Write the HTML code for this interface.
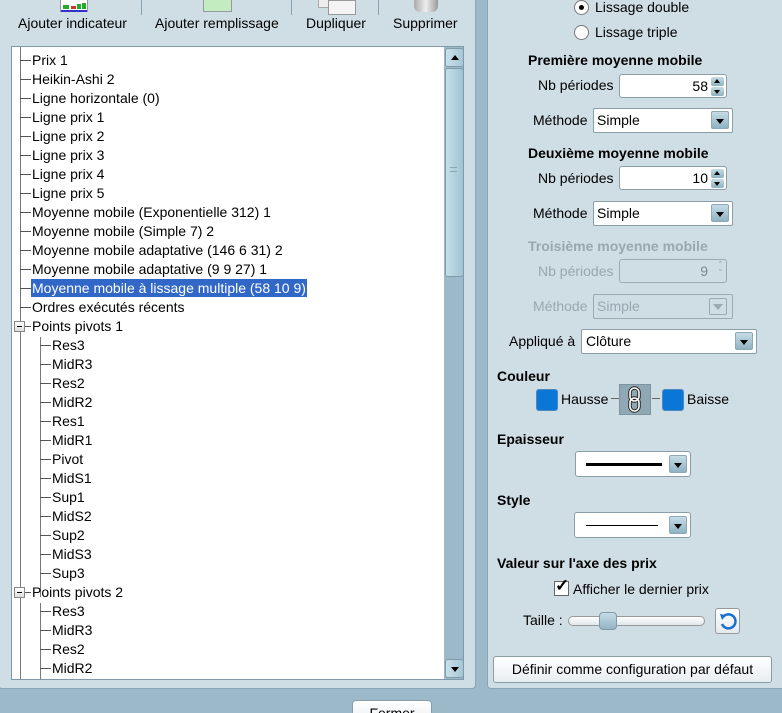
<!DOCTYPE html>
<html style="width:782px;height:713px;overflow:hidden"><head><meta charset="utf-8"><style>
*{margin:0;padding:0;box-sizing:border-box}
body{width:782px;height:713px;background:#9bb9c8;font-family:"Liberation Sans",Arial,sans-serif;font-size:13px;color:#000;position:relative;overflow:hidden}
.a{position:absolute;white-space:nowrap}
.panel{position:absolute;background:#cfdde4;border:1px solid #8aa5b3;border-radius:4px}
.tree{position:absolute;left:11px;top:46px;width:453px;height:634px;background:#fff;border:1px solid #7f9aa8;overflow:hidden}
.row{position:absolute;height:19px;line-height:19px}
.hl{position:absolute;background:#000;width:1px}
.hh{position:absolute;background:#555;height:1px}
.b{font-weight:bold}
.dis{color:#98a8b0}
.field{position:absolute;background:#fff;border:1px solid #8a9ea8;border-radius:3px}
.dd{position:absolute;width:18px;height:18px;border-radius:2px;background:linear-gradient(#c5dce6,#8fb2c2);border:1px solid #8ea9b6}
.dd:after{content:"";position:absolute;left:4px;top:7px;border-left:4px solid transparent;border-right:4px solid transparent;border-top:5px solid #000}
.btn{position:absolute;background:linear-gradient(#fff,#e8edf0);border:1px solid #8a9ea8;border-radius:3px;text-align:center}
.sp{position:absolute;right:2px;width:13px;height:9px;background:linear-gradient(#c5dce6,#8fb2c2);border-radius:2px}
.up:after{content:"";position:absolute;left:3px;top:2px;border-left:3px solid transparent;border-right:3px solid transparent;border-bottom:4px solid #000}
.dn:after{content:"";position:absolute;left:3px;top:3px;border-left:3px solid transparent;border-right:3px solid transparent;border-top:4px solid #000}
</style></head><body>
<div class="panel" style="left:-2px;top:-5px;width:478px;height:694px"></div>
<div class="panel" style="left:487px;top:-5px;width:300px;height:694px"></div>

<div class="a" style="left:60px;top:-2px;width:28px;height:14px;background:#fff;border:1px solid #999"><div class="a" style="left:2px;top:6px;width:6px;height:4px;background:#2a2"></div><div class="a" style="left:10px;top:7px;width:5px;height:3px;background:#c33"></div><div class="a" style="left:16px;top:5px;width:4px;height:5px;background:#2a2"></div><div class="a" style="left:21px;top:4px;width:4px;height:6px;background:#2a2"></div><div class="a" style="left:0;top:11px;width:26px;height:2px;background:#33c"></div></div>
<div class="a" style="left:203px;top:-2px;width:29px;height:14px;background:#c3ecc3;border:1px solid #999"></div>
<div class="a" style="left:318px;top:-2px;width:26px;height:10px;background:#eee;border:1px solid #aaa"></div>
<div class="a" style="left:328px;top:0px;width:28px;height:15px;background:#f4f4f4;border:1px solid #999"></div>
<div class="a" style="left:414px;top:-2px;width:24px;height:14px;background:linear-gradient(90deg,#aaa,#eee,#999);border-radius:0 0 6px 6px"></div>
<div class="a" style="left:141px;top:0;width:1px;height:15px;background:#8aa5b3"></div>
<div class="a" style="left:291px;top:0;width:1px;height:15px;background:#8aa5b3"></div>
<div class="a" style="left:378px;top:0;width:1px;height:15px;background:#8aa5b3"></div>
<div class="a" style="left:18px;top:15px;font-size:14px">Ajouter indicateur</div>
<div class="a" style="left:155px;top:15px;font-size:14px">Ajouter remplissage</div>
<div class="a" style="left:306px;top:15px;font-size:14px">Dupliquer</div>
<div class="a" style="left:393px;top:15px;font-size:14px">Supprimer</div>

<div class="tree">
 <div class="hl" style="left:8px;top:0;height:640px;background:#777"></div>
 <div class="hl" style="left:28px;top:290px;height:260px;background:#777"></div>
 <div class="hl" style="left:28px;top:556px;height:90px;background:#777"></div>
 <div id="rows"></div>
 <div class="a" style="left:432px;top:0;width:20px;height:632px;background:#9bb9c8"></div>
 <div class="a" style="left:433px;top:1px;width:19px;height:19px;background:linear-gradient(90deg,#c9e0ea,#a6c7d6);border:1px solid #7f9aa8;border-radius:3px"><div class="a" style="left:5px;top:6px;border-left:4px solid transparent;border-right:4px solid transparent;border-bottom:5px solid #000"></div></div>
 <div class="a" style="left:433px;top:21px;width:19px;height:209px;background:linear-gradient(90deg,#c4dfe9,#a1c3d3);border:1px solid #7f9aa8;border-radius:3px"></div>
 <div class="a" style="left:438px;top:120px;width:7px;height:5px;border-top:1px solid #8aa;border-bottom:1px solid #8aa"></div>
 <div class="a" style="left:433px;top:612px;width:19px;height:19px;background:linear-gradient(90deg,#c9e0ea,#a6c7d6);border:1px solid #7f9aa8;border-radius:3px"><div class="a" style="left:5px;top:7px;border-left:4px solid transparent;border-right:4px solid transparent;border-top:5px solid #000"></div></div>
</div>

<div class="a" style="left:574px;top:0px;width:15px;height:15px;border-radius:50%;background:#fff;border:1px solid #777"><div class="a" style="left:4px;top:4px;width:5px;height:5px;border-radius:50%;background:#000"></div></div>
<div class="a" style="left:595px;top:-1px;font-size:14px">Lissage double</div>
<div class="a" style="left:574px;top:25px;width:15px;height:15px;border-radius:50%;background:#fff;border:1px solid #777"></div>
<div class="a" style="left:595px;top:24px;font-size:14px">Lissage triple</div>

<div class="a b" style="left:528px;top:52px;font-size:14px">Première moyenne mobile</div>
<div class="a" style="left:538px;top:77px;font-size:14px">Nb périodes</div>
<div class="field" style="left:619px;top:74px;width:108px;height:24px"><span class="a" style="right:18px;top:3px;font-size:14px">58</span><div class="sp up" style="top:2px"></div><div class="sp dn" style="top:12px"></div></div>
<div class="a" style="left:533px;top:112px;font-size:14px">Méthode</div>
<div class="field" style="left:593px;top:108px;width:140px;height:25px;border-radius:2px"><span class="a" style="left:3px;top:3px;font-size:14px">Simple</span><div class="dd" style="right:3px;top:2px"></div></div>

<div class="a b" style="left:528px;top:145px;font-size:14px">Deuxième moyenne mobile</div>
<div class="a" style="left:538px;top:170px;font-size:14px">Nb périodes</div>
<div class="field" style="left:619px;top:166px;width:108px;height:24px"><span class="a" style="right:18px;top:3px;font-size:14px">10</span><div class="sp up" style="top:2px"></div><div class="sp dn" style="top:12px"></div></div>
<div class="a" style="left:533px;top:205px;font-size:14px">Méthode</div>
<div class="field" style="left:593px;top:201px;width:140px;height:25px;border-radius:2px"><span class="a" style="left:3px;top:3px;font-size:14px">Simple</span><div class="dd" style="right:3px;top:2px"></div></div>

<div class="a b dis" style="left:528px;top:238px;font-size:14px">Troisième moyenne mobile</div>
<div class="a dis" style="left:538px;top:263px;font-size:14px">Nb périodes</div>
<div class="field" style="left:619px;top:259px;width:108px;height:24px;background:#cfdde4;border-color:#9aaab2"><span class="a" style="right:18px;top:3px;font-size:14px;color:#7a8a92">9</span><span class="a" style="right:4px;top:0px;font-size:9px;color:#889">&#710;</span><span class="a" style="right:4px;top:8px;font-size:9px;color:#889">&#711;</span></div>
<div class="a dis" style="left:533px;top:298px;font-size:14px">Méthode</div>
<div class="field" style="left:593px;top:294px;width:140px;height:25px;border-radius:2px;background:#cfdde4;border-color:#9aaab2"><span class="a dis" style="left:3px;top:3px;font-size:14px">Simple</span><div class="a" style="right:5px;top:3px;width:18px;height:17px;border:1px solid #9aaab2;border-radius:2px"><div class="a" style="left:3px;top:5px;border-left:5px solid transparent;border-right:5px solid transparent;border-top:6px solid #9aaab2"></div></div></div>

<div class="a" style="left:509px;top:333px;font-size:14px">Appliqué à</div>
<div class="field" style="left:581px;top:329px;width:176px;height:25px;border-radius:2px"><span class="a" style="left:4px;top:3px;font-size:14px">Clôture</span><div class="dd" style="right:3px;top:2px"></div></div>

<div class="a b" style="left:497px;top:368px;font-size:14px">Couleur</div>
<div class="a" style="left:536px;top:389px;width:22px;height:22px;background:#0a77d6;border-radius:3px;border:1px solid #4a8ac0"></div>
<div class="a" style="left:561px;top:391px;font-size:14px">Hausse</div>
<div class="a" style="left:611px;top:398px;width:8px;height:1px;background:#666"></div>
<div class="a" style="left:619px;top:384px;width:32px;height:31px;background:#8fa8b4;border:1px solid #7a94a0"></div>
<svg class="a" style="left:619px;top:384px" width="32" height="31" viewBox="0 0 32 31"><rect x="11" y="4" width="9" height="13" rx="4.5" fill="none" stroke="#222" stroke-width="3.5"/><rect x="11" y="14" width="9" height="13" rx="4.5" fill="none" stroke="#222" stroke-width="3.5"/><rect x="11" y="4" width="9" height="13" rx="4.5" fill="none" stroke="#fff" stroke-width="1.6"/><rect x="11" y="14" width="9" height="13" rx="4.5" fill="none" stroke="#fff" stroke-width="1.6"/></svg>
<div class="a" style="left:652px;top:398px;width:8px;height:1px;background:#666"></div>
<div class="a" style="left:662px;top:389px;width:22px;height:22px;background:#0a77d6;border-radius:3px;border:1px solid #4a8ac0"></div>
<div class="a" style="left:687px;top:391px;font-size:14px">Baisse</div>

<div class="a b" style="left:497px;top:431px;font-size:14px">Epaisseur</div>
<div class="field" style="left:575px;top:451px;width:116px;height:26px"><div class="a" style="left:10px;top:11px;width:76px;height:3px;background:#000"></div><div class="dd" style="right:3px;top:3px"></div></div>

<div class="a b" style="left:497px;top:492px;font-size:14px">Style</div>
<div class="field" style="left:574px;top:512px;width:117px;height:26px"><div class="a" style="left:11px;top:12px;width:72px;height:1px;background:#000"></div><div class="dd" style="right:3px;top:3px"></div></div>

<div class="a b" style="left:497px;top:555px;font-size:14px">Valeur sur l'axe des prix</div>
<div class="a" style="left:554px;top:581px;width:15px;height:15px;background:#fff;border:1px solid #666"></div>
<div class="a" style="left:555px;top:576px;font-size:17px;font-weight:bold">✓</div>
<div class="a" style="left:573px;top:581px;font-size:14px">Afficher le dernier prix</div>
<div class="a" style="left:523px;top:612px;font-size:14px">Taille :</div>
<div class="a" style="left:568px;top:616px;width:137px;height:10px;background:linear-gradient(#fff,#e0e6e9);border:1px solid #999;border-radius:5px"></div>
<div class="a" style="left:599px;top:612px;width:18px;height:18px;background:linear-gradient(#c5dce6,#93b3c2);border:1px solid #7f9aa8;border-radius:4px"></div>
<div class="a" style="left:715px;top:608px;width:25px;height:26px;background:linear-gradient(#fff,#e4eaee);border:1px solid #999;border-radius:3px"></div>
<svg class="a" style="left:717px;top:610px" width="22" height="22" viewBox="0 0 22 22"><path d="M6 7 A7 7 0 1 1 5 14" fill="none" stroke="#1a6fcf" stroke-width="2.5"/><path d="M3 4 L9 5 L5 10 Z" fill="#1a6fcf"/></svg>
<div class="btn" style="left:493px;top:656px;width:279px;height:27px;line-height:25px;font-size:14px">Définir comme configuration par défaut</div>

<div class="btn" style="left:352px;top:700px;width:80px;height:26px;line-height:24px;font-size:14px;border-radius:4px">Fermer</div>

<script>
var items=[[0,"Prix 1"],[0,"Heikin-Ashi 2"],[0,"Ligne horizontale (0)"],[0,"Ligne prix 1"],[0,"Ligne prix 2"],[0,"Ligne prix 3"],[0,"Ligne prix 4"],[0,"Ligne prix 5"],[0,"Moyenne mobile (Exponentielle 312) 1"],[0,"Moyenne mobile (Simple 7) 2"],[0,"Moyenne mobile adaptative (146 6 31) 2"],[0,"Moyenne mobile adaptative (9 9 27) 1"],[0,"Moyenne mobile à lissage multiple (58 10 9)",1],[0,"Ordres exécutés récents"],[2,"Points pivots 1"],[1,"Res3"],[1,"MidR3"],[1,"Res2"],[1,"MidR2"],[1,"Res1"],[1,"MidR1"],[1,"Pivot"],[1,"MidS1"],[1,"Sup1"],[1,"MidS2"],[1,"Sup2"],[1,"MidS3"],[1,"Sup3"],[2,"Points pivots 2"],[1,"Res3"],[1,"MidR3"],[1,"Res2"],[1,"MidR2"]];
var h="";
items.forEach(function(it,i){var t=4+i*19;var lv=it[0];
if(lv==2){h+='<div class="a" style="left:2px;top:'+(t+4)+'px;width:11px;height:11px;border:1px solid #888;background:linear-gradient(#fff,#ddd)"><div class="a" style="left:2px;top:4px;width:5px;height:1px;background:#000"></div></div><div class="hh" style="left:13px;top:'+(t+9)+'px;width:6px"></div>';}
else{h+='<div class="hh" style="left:'+(lv==1?28:8)+'px;top:'+(t+9)+'px;width:11px"></div>';}
var tx=lv==1?39:19;
if(it[2])h+='<div class="row" style="left:'+tx+'px;top:'+t+'px;background:#3168c8;color:#fff;padding:0 1px;height:18px;line-height:18px;font-size:14px">'+it[1]+'</div>';
else h+='<div class="row" style="left:'+(tx+1)+'px;top:'+t+'px;font-size:14px">'+it[1]+'</div>';});
document.getElementById("rows").innerHTML=h;
</script>
</body></html>
